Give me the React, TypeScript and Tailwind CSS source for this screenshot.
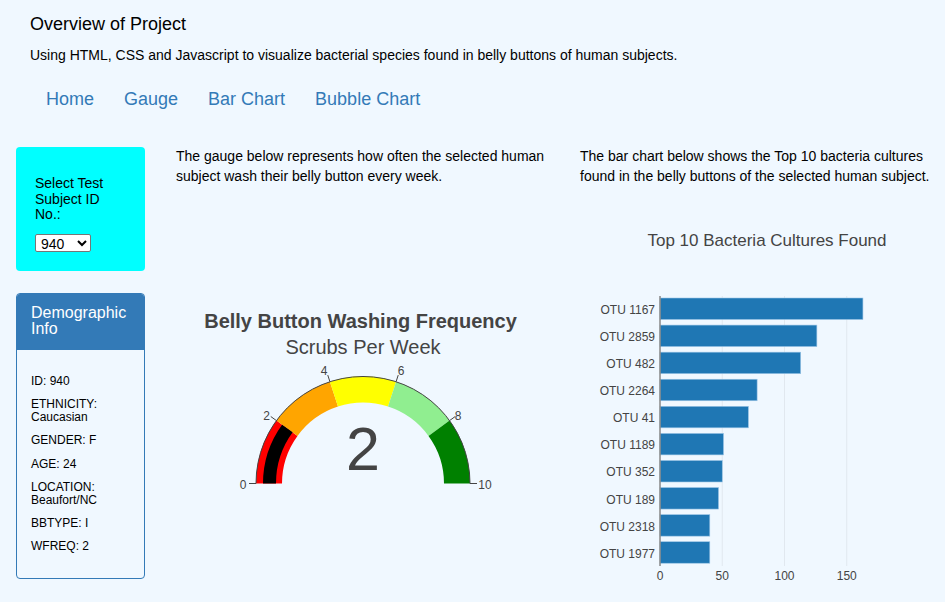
import React from "react";

const bars = [
  { l: "OTU 1167", v: 163 },
  { l: "OTU 2859", v: 126 },
  { l: "OTU 482", v: 113 },
  { l: "OTU 2264", v: 78 },
  { l: "OTU 41", v: 71 },
  { l: "OTU 1189", v: 51 },
  { l: "OTU 352", v: 50 },
  { l: "OTU 189", v: 47 },
  { l: "OTU 2318", v: 40 },
  { l: "OTU 1977", v: 40 },
];

const CX = 187;
const CY = 193.5;

function pt(v: number, r: number) {
  const t = Math.PI * (1 - v / 10);
  return [CX + r * Math.cos(t), CY - r * Math.sin(t)];
}

function seg(a: number, b: number, r1: number, r2: number) {
  const [x1, y1] = pt(a, r2);
  const [x2, y2] = pt(b, r2);
  const [x3, y3] = pt(b, r1);
  const [x4, y4] = pt(a, r1);
  return `M${x1},${y1} A${r2},${r2} 0 0 1 ${x2},${y2} L${x3},${y3} A${r1},${r1} 0 0 0 ${x4},${y4} Z`;
}

function Gauge() {
  const steps = [
    { a: 0, b: 2, c: "#ff0000" },
    { a: 2, b: 4, c: "#ffa500" },
    { a: 4, b: 6, c: "#ffff00" },
    { a: 6, b: 8, c: "#90ee90" },
    { a: 8, b: 10, c: "#008000" },
  ];
  const labels = [
    { v: 0, x: 67, y: 199 },
    { v: 2, x: 90.5, y: 130 },
    { v: 4, x: 148, y: 85 },
    { v: 6, x: 225, y: 85 },
    { v: 8, x: 282, y: 130 },
    { v: 10, x: 309, y: 199 },
  ];
  const [ox1, oy1] = pt(0, 107);
  const [ox2, oy2] = pt(10, 107);
  return (
    <svg width="373" height="210" viewBox="0 0 373 210" style={{ fontFamily: '"Liberation Sans", Arial, sans-serif' }}>
      <text x="184.5" y="38" textAnchor="middle" fontSize="20" fontWeight="bold" fill="#444">
        Belly Button Washing Frequency
      </text>
      <text x="187" y="64" textAnchor="middle" fontSize="20" fill="#444">
        Scrubs Per Week
      </text>
      {steps.map((s) => (
        <path key={s.a} d={seg(s.a, s.b, 81, 107)} fill={s.c} />
      ))}
      <path d={seg(0, 2, 87, 100)} fill="#000" />
      <path d={`M${ox1},${oy1} A107,107 0 0 1 ${ox2},${oy2}`} fill="none" stroke="#444" strokeWidth="1" />
      {[0, 2, 4, 6, 8, 10].map((v) => {
        const [a, b] = pt(v, 107);
        const [c, d] = pt(v, 114);
        return <line key={v} x1={a} y1={b} x2={c} y2={d} stroke="#444" strokeWidth="1" />;
      })}
      {labels.map((l) => (
        <text key={l.v} x={l.x} y={l.y} textAnchor="middle" fontSize="12" fill="#444">
          {l.v}
        </text>
      ))}
      <text x="187" y="180" textAnchor="middle" fontSize="61" fill="#444">
        2
      </text>
    </svg>
  );
}

function BarChart() {
  const x0 = 80;
  const k = 1.245;
  return (
    <svg width="360" height="370" viewBox="0 0 360 370" style={{ fontFamily: '"Liberation Sans", Arial, sans-serif' }}>
      <text x="187" y="26" textAnchor="middle" fontSize="17" fill="#444">
        Top 10 Bacteria Cultures Found
      </text>
      {[50, 100, 150].map((t) => (
        <line key={t} x1={x0 + t * k} y1="76" x2={x0 + t * k} y2="346" stroke="#e1e8ef" strokeWidth="1" />
      ))}
      {bars.map((b, i) => {
        const y = 78 + 27.08 * i;
        return (
          <g key={b.l}>
            <rect x={x0} y={y} width={b.v * k} height="21.5" fill="#1f77b4" stroke="#9cc5e6" strokeWidth="0.6" />
            <text x="75" y={y + 16} textAnchor="end" fontSize="12" fill="#444">
              {b.l}
            </text>
          </g>
        );
      })}
      <line x1={x0} y1="76" x2={x0} y2="346" stroke="#888" strokeWidth="1.5" />
      {[0, 50, 100, 150].map((t) => (
        <text key={t} x={x0 + t * k} y="360" textAnchor="middle" fontSize="12" fill="#444">
          {t}
        </text>
      ))}
    </svg>
  );
}

export default function App() {
  const demo = [
    ["ID: 940"],
    ["ETHNICITY:", "Caucasian"],
    ["GENDER: F"],
    ["AGE: 24"],
    ["LOCATION:", "Beaufort/NC"],
    ["BBTYPE: I"],
    ["WFREQ: 2"],
  ];
  return (
    <div className="min-h-[602px] w-[945px] bg-[#f0f8ff] text-black" style={{ fontFamily: '"Liberation Sans", Arial, sans-serif' }}>
      <div className="px-[30px] pt-[13px]">
        <div className="text-[18px] leading-[22px]">Overview of Project</div>
        <div className="mt-[10px] text-[14px] leading-[20px]">
          Using HTML, CSS and Javascript to visualize bacterial species found in belly buttons of human subjects.
        </div>
        <div className="ml-[16px] mt-[23px] flex gap-[30px] text-[18px] leading-[22px] text-[#337ab7]">
          <span>Home</span>
          <span>Gauge</span>
          <span>Bar Chart</span>
          <span>Bubble Chart</span>
        </div>
      </div>
      <div className="mt-[36px] flex pl-[16px]">
        <div className="w-[129px] shrink-0">
          <div className="mt-[1px] h-[124px] rounded-[4px] bg-[#00ffff] pl-[19px] pt-[29px]">
            <div className="text-[14px] leading-[15.5px]">
              Select Test
              <br />
              Subject ID
              <br />
              No.:
            </div>
            <select
              defaultValue="940"
              className="mt-[11px] h-[18px] w-[56px] rounded-[2px] border border-[#767676] bg-white pl-[1px] text-[14px] leading-[16px]"
            >
              <option>940</option>
            </select>
          </div>
          <div className="mt-[22px] h-[286px] rounded-[4px] border border-[#337ab7]">
            <div className="h-[56px] rounded-t-[3px] bg-[#337ab7] pl-[14px] pt-[11px] text-[16px] leading-[16px] text-white">
              Demographic
              <br />
              Info
            </div>
            <div className="pl-[14px] pt-[25px] text-[12px] leading-[13px]">
              {demo.map((d) => (
                <div key={d[0]} className="mb-[10.2px]">
                  {d.map((l) => (
                    <div key={l}>{l}</div>
                  ))}
                </div>
              ))}
            </div>
          </div>
        </div>
        <div className="ml-[31px] w-[373px] shrink-0">
          <p className="text-[14px] leading-[20px]">
            The gauge below represents how often the selected human subject wash their belly button every week.
          </p>
          <div className="mt-[104px]">
            <Gauge />
          </div>
        </div>
        <div className="ml-[31px] w-[360px] shrink-0">
          <p className="text-[14px] leading-[20px]">
            The bar chart below shows the Top 10 bacteria cultures found in the belly buttons of the selected human subject.
          </p>
          <div className="mt-[34px]">
            <BarChart />
          </div>
        </div>
      </div>
    </div>
  );
}
